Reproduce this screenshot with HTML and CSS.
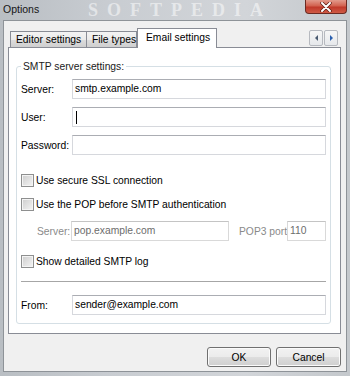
FILE: index.html
```html
<!DOCTYPE html>
<html lang="en">
<head>
    <meta charset="UTF-8">
    <title>Options</title>
    <link rel="stylesheet" href="styles.css">
</head>
<body>

    <div class="window">
        <!-- Title bar -->
        <div class="titlebar">
            <span class="title">Options</span>
            <span class="watermark">SOFTPEDIA</span>
            <div class="close">
                <svg width="12" height="10" viewBox="0 0 12 10">
                    <path d="M2 1 L10 9 M10 1 L2 9" stroke="#5a1a12" stroke-width="3.4" stroke-linecap="round"/>
                    <path d="M2 1 L10 9 M10 1 L2 9" stroke="#ffffff" stroke-width="2" stroke-linecap="round"/>
                </svg>
            </div>
        </div>

        <div class="client">
            <!-- Tabs -->
            <div class="tabbar">
                <div class="tab tab-editor">Editor settings</div>
                <div class="tab tab-files">File types</div>
                <div class="tab active">Email settings</div>
                <div class="scroller">
                    <span class="scroll-btn"><span class="arrow left"></span></span>
                    <span class="scroll-btn"><span class="arrow right"></span></span>
                </div>
            </div>

            <div class="pane">
                <fieldset class="group">
                    <legend>SMTP server settings:</legend>

                    <div class="row row-server">
                        <span class="label">Server:</span>
                        <div class="field">smtp.example.com</div>
                    </div>
                    <div class="row row-user">
                        <span class="label">User:</span>
                        <div class="field"><span class="caret"></span></div>
                    </div>
                    <div class="row row-pass">
                        <span class="label">Password:</span>
                        <div class="field"></div>
                    </div>

                    <div class="row check row-ssl">
                        <span class="box"></span>
                        <span>Use secure SSL connection</span>
                    </div>
                    <div class="row check row-pop">
                        <span class="box"></span>
                        <span>Use the POP before SMTP authentication</span>
                    </div>

                    <div class="row row-popserver">
                        <span class="label disabled pop-label">Server:</span>
                        <div class="field disabled pop-field">pop.example.com</div>
                        <span class="label disabled port-label">POP3 port:</span>
                        <div class="field disabled port-field">110</div>
                    </div>

                    <div class="row check row-log">
                        <span class="box"></span>
                        <span>Show detailed SMTP log</span>
                    </div>

                    <div class="separator"></div>

                    <div class="row row-from">
                        <span class="label">From:</span>
                        <div class="field">sender@example.com</div>
                    </div>
                </fieldset>
            </div>

            <!-- Dialog buttons -->
            <div class="buttons">
                <button class="btn btn-ok">OK</button>
                <button class="btn btn-cancel">Cancel</button>
            </div>
        </div>
    </div>

</body>
</html>
```

FILE: styles.css
```css
* {
    box-sizing: border-box;
}

body {
    margin: 0;
    font-family: "Liberation Sans", Arial, sans-serif;
    font-size: 10.3px;
    color: #000000;
}

.window {
    width: 350px;
    height: 376px;
    display: flex;
    flex-direction: column;
    background: linear-gradient(90deg, #b9bec3, #c8ccd1 30%, #d2d5d9 70%, #c4c8cc);
}

.titlebar {
    position: relative;
    height: 20px;
    display: flex;
    align-items: flex-start;
    padding-left: 3px;
}

.title {
    margin-top: 3px;
    font-size: 10.5px;
    color: #151515;
    position: relative;
    z-index: 1;
}

.watermark {
    position: absolute;
    left: 88px;
    top: 0;
    font-family: "Liberation Serif", serif;
    font-weight: bold;
    font-size: 18px;
    line-height: 20px;
    letter-spacing: 9px;
    color: rgba(255, 255, 255, 0.5);
}

.close {
    margin-left: auto;
    margin-right: 3px;
    width: 42px;
    height: 14px;
    border: 1px solid #6b2a22;
    border-top: none;
    border-radius: 0 0 4px 4px;
    background: linear-gradient(#e29a8c, #d2624f 45%, #c0392a 55%, #cf5a45);
    display: flex;
    align-items: center;
    justify-content: center;
    position: relative;
    z-index: 1;
}

.client {
    flex: 1;
    margin: 0 3px 4px 3px;
    background-color: #f0f0f0;
    border: 1px solid #8e9398;
    padding: 7px 5px 4px 4px;
    display: flex;
    flex-direction: column;
}

/* Tabs */
.tabbar {
    height: 20px;
    margin-bottom: -1px;
    padding-left: 2px;
    display: flex;
    align-items: flex-end;
    position: relative;
    z-index: 1;
}

.tab {
    height: 16px;
    margin-bottom: 1px;
    border: 1px solid #898c95;
    border-bottom: none;
    background: linear-gradient(#f3f3f3, #ebebeb 50%, #dddddd 51%, #cfcfcf);
    padding-left: 5px;
    line-height: 15px;
    white-space: nowrap;
}

.tab-editor {
    width: 77px;
}

.tab-files {
    width: 51px;
    margin-left: -1px;
}

.tab.active {
    width: 80px;
    height: 20px;
    margin-bottom: 0;
    margin-left: 0;
    background: #ffffff;
    padding-left: 8px;
    line-height: 17px;
}

.scroller {
    margin-left: auto;
    margin-right: 3px;
    align-self: flex-start;
    margin-top: 2px;
    display: flex;
    gap: 1px;
}

.scroll-btn {
    width: 14px;
    height: 16px;
    border: 1px solid #b6b9bf;
    border-radius: 2px;
    background: linear-gradient(#f6f6f6, #e6e8eb);
    display: flex;
    align-items: center;
    justify-content: center;
}

.arrow {
    width: 0;
    height: 0;
    border-top: 3px solid transparent;
    border-bottom: 3px solid transparent;
}

.arrow.left {
    border-right: 3px solid #4a5a70;
}

.arrow.right {
    border-left: 3px solid #2a5fae;
}

/* Tab page */
.pane {
    height: 287px;
    background: #ffffff;
    border: 1px solid #898c95;
    padding: 12px 9px 9px 7px;
}

.group {
    margin: 0;
    min-width: 0;
    border: 1px solid #d5dfe5;
    border-radius: 3px;
    padding: 0 4px 8px 4px;
    display: flex;
    flex-direction: column;
}

.group legend {
    padding: 0 2px;
    line-height: 13px;
    color: #1a1a1a;
}

.row {
    height: 20px;
    display: flex;
    align-items: center;
    white-space: nowrap;
}

.label {
    width: 51px;
    flex-shrink: 0;
}

.field {
    flex: 1;
    height: 20px;
    border: 1px solid #d6d8dd;
    border-top-color: #abadb3;
    background: #ffffff;
    padding-left: 2px;
    line-height: 18px;
    display: flex;
    align-items: center;
}

.caret {
    width: 1px;
    height: 13px;
    background: #000000;
    margin-left: 1px;
}

.row-server {
    margin-top: 6px;
}

.row-user,
.row-pass {
    margin-top: 8px;
}

.row-ssl {
    margin-top: 15px;
}

.row-pop {
    margin-top: 4px;
}

.row-popserver {
    margin-top: 7px;
}

.row-log {
    margin-top: 10px;
}

.row-from {
    margin-top: 13px;
}

.box {
    width: 13px;
    height: 13px;
    margin-right: 2px;
    border: 1px solid #8e8f8f;
    background: linear-gradient(135deg, #cdcdcd, #f4f4f4);
    box-shadow: inset 0 0 0 1px #f4f4f4;
}

.disabled {
    color: #8a8a8a;
}

.field.disabled {
    color: #6d6d6d;
    border-color: #d9d9d9;
    border-top-color: #c4c4c4;
}

.pop-label {
    margin-left: 16px;
    width: 34px;
}

.pop-field {
    flex: none;
    width: 158px;
}

.port-label {
    margin-left: 10px;
    width: 48px;
}

.separator {
    margin-top: 10px;
    height: 1px;
    background: #a6a6a6;
}

/* Dialog buttons */
.buttons {
    margin-top: 13px;
    display: flex;
    justify-content: flex-end;
    gap: 5px;
}

.btn {
    height: 20px;
    padding: 0;
    border: 1px solid #707070;
    border-radius: 3px;
    background: linear-gradient(#f2f2f2, #ebebeb 50%, #dddddd 51%, #cfcfcf);
    box-shadow: inset 0 0 0 1px #fbfbfb;
    font-family: "Liberation Sans", Arial, sans-serif;
    font-size: 10.3px;
    color: #000000;
}

.btn-ok {
    width: 64px;
}

.btn-cancel {
    width: 65px;
}
```
